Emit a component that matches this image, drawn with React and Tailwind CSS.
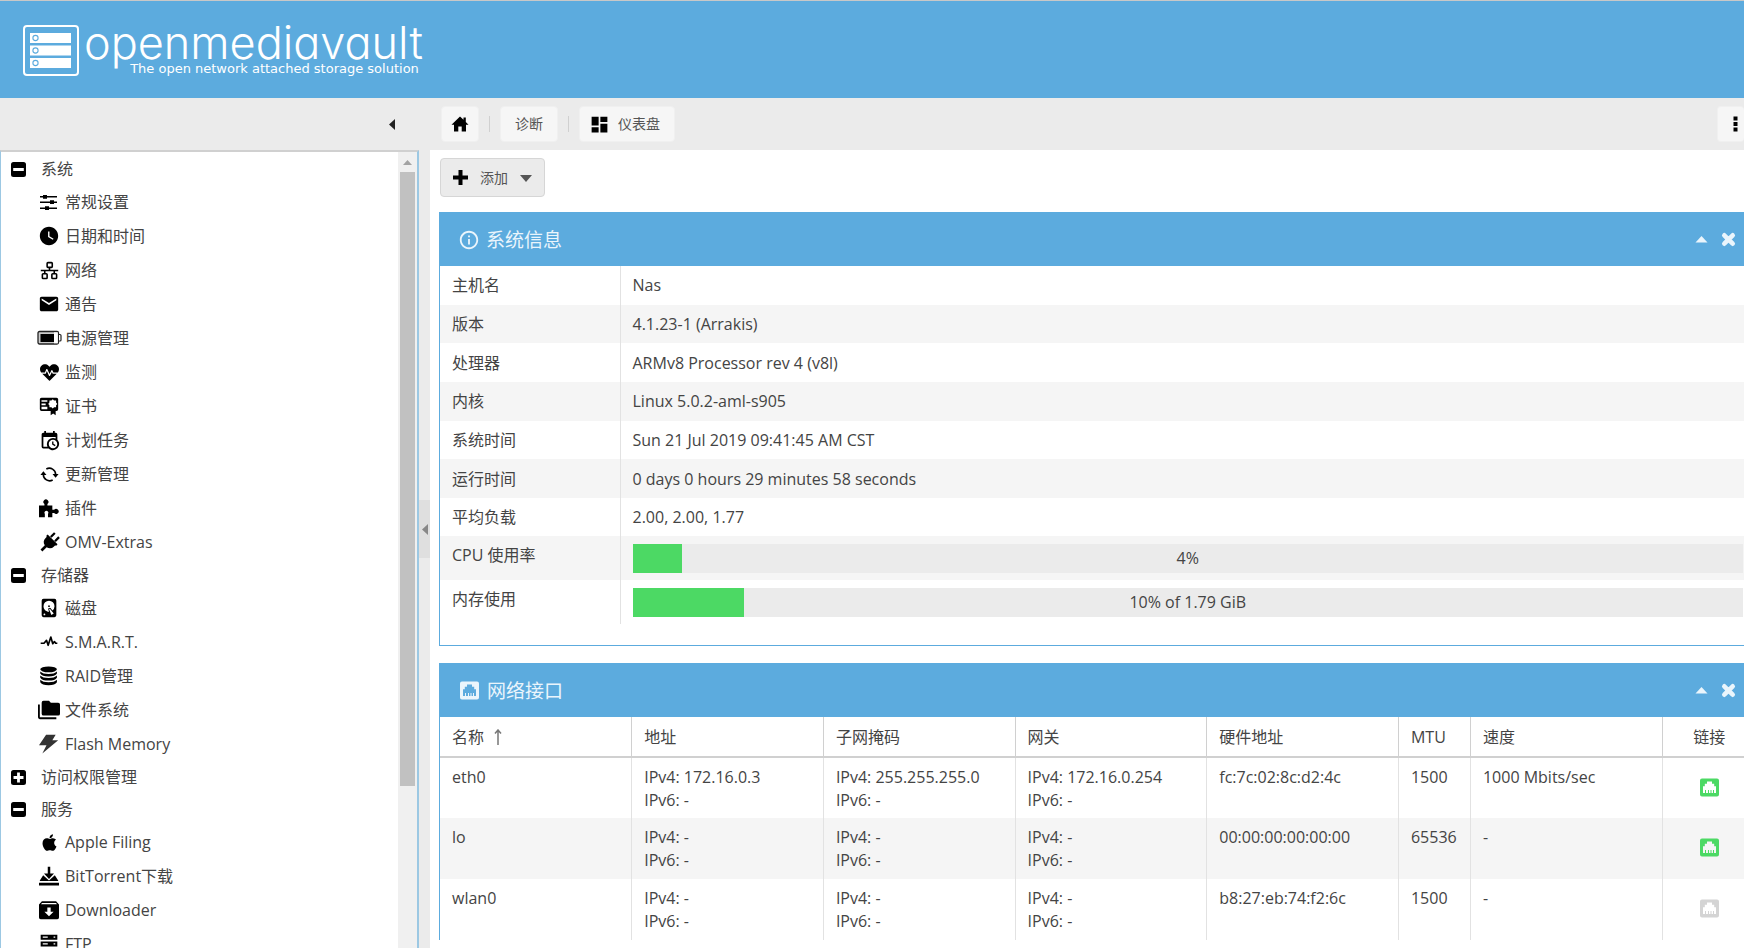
import { useState } from 'react'
import { FaApple, FaHeartbeat } from 'react-icons/fa'
import { MdDashboard, MdEmail, MdInfoOutline, MdWatchLater } from 'react-icons/md'

function Svg({ size = 20, box = 24, className = '', children }) {
    return (
        <svg width={size} height={size} viewBox={`0 0 ${box} ${box}`} fill="currentColor" aria-hidden="true" className={`shrink-0 ${className}`}>
            {children}
        </svg>
    )
}

const IconTune = () => (
    <Svg size={18} box={18}>
        <path d="M0 3h17v1.500H0zM0 8.500h17V10H0zM0 14.500h17V16H0zM3 2h4v3.800H3zM10 7.300h4V11h-4zM5 13.300h4V17H5z" />
    </Svg>
)

const IconNetwork = () => (
    <Svg size={19}>
        <g fill="none" stroke="currentColor" strokeWidth="2">
            <rect x="9" y="2" width="6.500" height="6" rx="1" />
            <rect x="3" y="16" width="6" height="6" rx="1" />
            <rect x="15" y="16" width="6" height="6" rx="1" />
            <path d="M12 8v4M1 12h22M6 12v4M18 12v4" />
        </g>
    </Svg>
)

const IconBattery = () => (
    <svg width="25" height="16" viewBox="0 0 25 16" aria-hidden="true" className="shrink-0">
        <rect x="1" y="1.500" width="20.500" height="12.500" rx="1.500" fill="#ccc" stroke="#222" strokeWidth="1.300" />
        <path d="M17 2.300h3.800v11H17z" fill="#fff" />
        <path d="M3.500 4H17v8H3.500z" fill="#000" />
        <path d="M22 4.500h1q1 0 1 1v4.500q0 1-1 1h-1" fill="#fff" stroke="#222" strokeWidth="1.200" />
    </svg>
)

const IconCertificate = () => (
    <Svg>
        <path fillRule="evenodd" d="M3 2h18a2 2 0 0 1 2 2v12a2 2 0 0 1-2 2h-1v5l-3-2-3 2v-5H3a2 2 0 0 1-2-2V4a2 2 0 0 1 2-2zm0 3v2h7V5zm0 4v2h5V9zm0 4v3h7v-3zM16.500 4l-1.600 1.500h-2.400v2.400L11 9.500l1.500 1.700v2.300h2.400l1.600 1.500 1.600-1.500h2.400v-2.300L22 9.500l-1.500-1.600V5.500h-2.400z" />
    </Svg>
)

const IconCalendarClock = () => (
    <Svg size={21}>
        <path d="M15 13h1.500v2.820l2.440 1.410-.75 1.300L15 16.690V13m4-5H5v11h4.670c-.43-.91-.67-1.930-.67-3a7 7 0 0 1 7-7c1.070 0 2.090.24 3 .67V8M5 21a2 2 0 0 1-2-2V5c0-1.110.89-2 2-2h1V1h2v2h8V1h2v2h1a2 2 0 0 1 2 2v6.100c1.240 1.260 2 2.990 2 4.900a7 7 0 0 1-7 7c-1.910 0-3.640-.76-4.900-2H5m11-9.850A4.850 4.850 0 0 0 11.150 16c0 2.680 2.170 4.850 4.850 4.850A4.850 4.850 0 0 0 20.850 16c0-2.680-2.170-4.850-4.850-4.850z" />
    </Svg>
)

const IconRefresh = () => (
    <Svg size={19}>
        <path d="M8 5A8 8 0 0 1 19.800 12M16 19A8 8 0 0 1 4.200 12" fill="none" stroke="currentColor" strokeWidth="2" />
        <path d="M15.800 11.500h7.700L19.700 16zM.5 12.500h7.700L4.300 8z" />
    </Svg>
)

const IconPuzzle = () => (
    <Svg>
        <path d="M0 9h6.500V7.200a3 3 0 1 1 3.600 0V9H16v5.200h2.200a3 3 0 1 1 0 3.800H16v5h-5.200v-4a2.300 2.300 0 1 0-3.800 0v4H0z" />
    </Svg>
)

const IconPlug = () => (
    <Svg size={21}>
        <g transform="rotate(45 12 12)">
            <path d="M7.300 0h2.600v6.500H7.300zM14.100 0h2.600v6.500h-2.600zM4 7h16v2.500h-1.200v2a6.800 6.800 0 0 1-5.300 6.600V25h-3v-6.900a6.800 6.800 0 0 1-5.300-6.600v-2H4z" />
        </g>
    </Svg>
)

const IconDisk = () => (
    <Svg size={22}>
        <path d="M6 2h12a2 2 0 0 1 2 2v16a2 2 0 0 1-2 2H6a2 2 0 0 1-2-2V4a2 2 0 0 1 2-2m6 2a6 6 0 0 0-6 6c0 3.310 2.690 6 6.100 6l-.88-2.230a1.010 1.010 0 0 1 .37-1.370l.86-.5a1.010 1.010 0 0 1 1.370.37l1.920 2.420A5.977 5.977 0 0 0 18 10a6 6 0 0 0-6-6m0 5a1 1 0 1 1 0 2 1 1 0 0 1 0-2m-5 9a1 1 0 1 0 0 2 1 1 0 0 0 0-2m5.090-4.730l2.490 6.310 2.590-1.500-4.220-5.310-.86.5z" />
    </Svg>
)

const IconPulse = () => (
    <Svg>
        <path d="M2 13.500h4l3-3.500 2 6 3.200-10 2.300 8 2-2.500 1.500 2h2" fill="none" stroke="currentColor" strokeWidth="2" strokeLinejoin="round" />
    </Svg>
)

const IconDatabase = () => (
    <Svg>
        <ellipse cx="11.500" cy="4" rx="10" ry="3.500" />
        <path d="M1.500 6.500q3 3 10 3t10-3V9q-2 3.500-10 3.500T1.500 9zM1.500 11.500q3 3 10 3t10-3V14q-2 3.500-10 3.500T1.500 14zM1.500 16.500q3 3 10 3t10-3v3q-2 3.500-10 3.500T1.500 19.500z" />
    </Svg>
)

const IconFolders = () => (
    <Svg size={22}>
        <path d="M22 4h-8l-2-2H6a2 2 0 0 0-2 2v12a2 2 0 0 0 2 2h16a2 2 0 0 0 2-2V6a2 2 0 0 0-2-2M2 6H0v14a2 2 0 0 0 2 2h18v-2H2V6z" />
    </Svg>
)

const IconFlash = () => (
    <Svg className="text-[#333]">
        <path d="M8.500 1H20l-4 6.500h7L4 23.500l5-10H0z" />
    </Svg>
)

const IconDownload = () => (
    <Svg>
        <path d="M10.500 1h3v8H18l-6 6.500L6 9h4.500zM5 11l7 6.500L19 11l4 6.500v.5H1v-.5zM0 20h24v3.500H0z" />
    </Svg>
)

const IconArchive = () => (
    <Svg>
        <path fillRule="evenodd" d="M3.500 1.500h17l3.500 4V21a2 2 0 0 1-2 2H2a2 2 0 0 1-2-2V5.500zM3.500 3.500l-1 1.500h19l-1-1.500zM10 9v5H6.500l5.500 5.500 5.500-5.500H14V9z" />
    </Svg>
)

const IconServer = () => (
    <Svg>
        <path fillRule="evenodd" d="M2 1h20v6H2zm2.500 2v1.500h6V3zm13 0v1.500h2V3zM2 9h20v6H2zm2.500 2v1.500h6V11zm13 0v1.500h2V11zM2 17h20v6H2zm2.500 2v1.500h6V19zm13 0v1.500h2V19z" />
    </Svg>
)

const IconEthernet = ({ className = '' }) => (
    <Svg size={19} box={19} className={className}>
        <path fillRule="evenodd" d="M2 .5h15a2 2 0 0 1 2 2v14a2 2 0 0 1-2 2H2a2 2 0 0 1-2-2v-14a2 2 0 0 1 2-2zM7 3.500v2.300H4.800v2.500H3V15h2v-3h1v3h2v-3h1v3h1.500v-3h1v3h1.500v-3h1v3h2V8.300h-1.800V5.800H12V3.500z" />
    </Svg>
)

const IconHome = () => (
    <Svg size={18} box={18}>
        <path d="M9 1.500l3.500 3.300V2.500h2.300v4.500L17.500 9.800H15V16.500h-4.300V11.500H7.300v5H3V9.800H.5z" />
    </Svg>
)

const IconCaretUp = () => (
    <Svg size={13} box={13}>
        <path d="M.5 9.500L6.500 3l6 6.500z" />
    </Svg>
)

const IconClose = () => (
    <Svg size={15} box={15}>
        <path d="M3.300 3.300l8.400 8.400M11.700 3.300l-8.400 8.400" stroke="currentColor" strokeWidth="4.600" strokeLinecap="round" />
    </Svg>
)

const IconFold = ({ open }) => (
    <Svg size={15} box={15}>
        <path fillRule="evenodd" d={open
            ? 'M2.500 0h10A2.500 2.500 0 0 1 15 2.500v10a2.500 2.500 0 0 1-2.500 2.500h-10A2.500 2.500 0 0 1 0 12.500v-10A2.500 2.500 0 0 1 2.500 0zM2.200 6v3h10.600V6z'
            : 'M2.500 0h10A2.500 2.500 0 0 1 15 2.500v10a2.500 2.500 0 0 1-2.500 2.500h-10A2.500 2.500 0 0 1 0 12.500v-10A2.500 2.500 0 0 1 2.500 0zM6.100 2.500v3.600H2.500v2.800h3.600v3.600h2.800V8.900h3.600V6.100H8.900V2.500z'} />
    </Svg>
)

const arbol = [
    {
        nombre: '系统', abierto: true, hijos: [
            ['常规设置', <IconTune />],
            ['日期和时间', <MdWatchLater size={22} />],
            ['网络', <IconNetwork />],
            ['通告', <MdEmail size={22} />],
            ['电源管理', <IconBattery />],
            ['监测', <FaHeartbeat size={19} />],
            ['证书', <IconCertificate />],
            ['计划任务', <IconCalendarClock />],
            ['更新管理', <IconRefresh />],
            ['插件', <IconPuzzle />],
            ['OMV-Extras', <IconPlug />],
        ],
    },
    {
        nombre: '存储器', abierto: true, hijos: [
            ['磁盘', <IconDisk />],
            ['S.M.A.R.T.', <IconPulse />],
            ['RAID管理', <IconDatabase />],
            ['文件系统', <IconFolders />],
            ['Flash Memory', <IconFlash />],
        ],
    },
    { nombre: '访问权限管理', abierto: false, hijos: [] },
    {
        nombre: '服务', abierto: true, hijos: [
            ['Apple Filing', <FaApple size={19} />],
            ['BitTorrent下载', <IconDownload />],
            ['Downloader', <IconArchive />],
            ['FTP', <IconServer />],
        ],
    },
]

const info = [
    ['主机名', 'Nas'],
    ['版本', '4.1.23-1 (Arrakis)'],
    ['处理器', 'ARMv8 Processor rev 4 (v8l)'],
    ['内核', 'Linux 5.0.2-aml-s905'],
    ['系统时间', 'Sun 21 Jul 2019 09:41:45 AM CST'],
    ['运行时间', '0 days 0 hours 29 minutes 58 seconds'],
    ['平均负载', '2.00, 2.00, 1.77'],
]

const barras = [
    ['CPU 使用率', '4%', 4.5],
    ['内存使用', '10% of 1.79 GiB', 10],
]

const interfaces = [
    { nombre: 'eth0', ip: '172.16.0.3', mascara: '255.255.255.0', puerta: '172.16.0.254', mac: 'fc:7c:02:8c:d2:4c', mtu: '1500', velocidad: '1000 Mbits/sec', enlace: true },
    { nombre: 'lo', ip: '-', mascara: '-', puerta: '-', mac: '00:00:00:00:00:00', mtu: '65536', velocidad: '-', enlace: true },
    { nombre: 'wlan0', ip: '-', mascara: '-', puerta: '-', mac: 'b8:27:eb:74:f2:6c', mtu: '1500', velocidad: '-', enlace: false },
]

function Logo() {
    return (
        <a href="#" aria-label="openmediavault" className="flex items-start gap-[5px] text-white">
            <svg width="56" height="51" viewBox="0 0 56 51" aria-hidden="true" className="mt-[24px] shrink-0">
                <rect x="1" y="1" width="54" height="49" rx="3" fill="none" stroke="#fff" strokeWidth="2" />
                <g fill="#fff">
                    <path d="M7 8h41v10H7zM7 20.500h41v10H7zM7 33h41v10H7z" />
                </g>
                <g fill="none" stroke="#5cabde" strokeWidth="1.100">
                    <circle cx="12.500" cy="13" r="2.600" />
                    <circle cx="12.500" cy="25.500" r="2.600" />
                    <circle cx="12.500" cy="38" r="2.600" />
                </g>
            </svg>
            <span className="flex flex-col items-end pt-[18px]">
                <span className="font-['Inter',sans-serif] text-[45px] leading-[48px] font-light [font-feature-settings:'cv11']">openmediavault</span>
                <span className="-mt-[6px] pr-1 font-['DejaVu_Sans',sans-serif] text-[13px] leading-4">The open network attached storage solution</span>
            </span>
        </a>
    )
}

function Arbol() {
    const [abiertos, setAbiertos] = useState(arbol.map((g) => g.abierto))

    return (
        <nav className="min-w-0 flex-1 overflow-hidden pt-px text-[#444]">
            {arbol.map((grupo, i) => (
                <div key={grupo.nombre}>
                    <button
                        onClick={() => setAbiertos(abiertos.map((a, j) => (j === i ? !a : a)))}
                        aria-expanded={abiertos[i]}
                        className="flex h-8 w-full items-center gap-[15px] pl-[10px]"
                    >
                        <span className="text-black"><IconFold open={abiertos[i]} /></span>
                        {grupo.nombre}
                    </button>
                    {abiertos[i] && grupo.hijos.map(([nombre, icono]) => (
                        <a key={nombre} href="#" className="flex h-[34px] items-center gap-[5px] pl-[37px] whitespace-nowrap">
                            <span className="flex w-[22px] shrink-0 justify-center text-black">{icono}</span>
                            {nombre}
                        </a>
                    ))}
                </div>
            ))}
        </nav>
    )
}

function Panel({ titulo, icono, className = '', children }) {
    return (
        <section className={`border border-r-0 border-[#5cabde] bg-white ${className}`}>
            <header className="flex h-[53px] items-center gap-2 bg-[#5cabde] pr-2 pl-5 text-[#eaf5fc]">
                {icono}
                <h2 className="flex-1 text-[19px] leading-6">{titulo}</h2>
                <button aria-label="折叠"><IconCaretUp /></button>
                <button aria-label="关闭" className="ml-[5px]"><IconClose /></button>
            </header>
            {children}
        </section>
    )
}

function InfoSistema() {
    return (
        <Panel titulo="系统信息" icono={<MdInfoOutline size={22} className="-mx-[2px]" />} className="pb-[21px]">
            <table className="h-[358px] w-full table-fixed border-collapse">
                <colgroup>
                    <col className="w-[180px]" />
                    <col />
                </colgroup>
                <tbody>
                    {info.map(([campo, valor]) => (
                        <tr key={campo} className="h-[38px] even:bg-[#f5f5f5]">
                            <th scope="row" className="border-r border-[#e2e2e2] px-3 text-left font-normal">{campo}</th>
                            <td className="px-3">{valor}</td>
                        </tr>
                    ))}
                    {barras.map(([campo, texto, valor]) => (
                        <tr key={campo} className="h-[43px] even:bg-[#f5f5f5]">
                            <th scope="row" className="border-r border-[#e2e2e2] px-3 pt-2 text-left align-top font-normal">{campo}</th>
                            <td className="pr-px pl-3">
                                <div role="progressbar" aria-label={campo} aria-valuenow={valor} className="grid h-[29px] items-center bg-[#ebebeb] text-center">
                                    <div className="col-start-1 row-start-1 h-full bg-[#4cd964]" style={{ width: `${valor}%` }} />
                                    <span className="col-start-1 row-start-1">{texto}</span>
                                </div>
                            </td>
                        </tr>
                    ))}
                </tbody>
            </table>
        </Panel>
    )
}

function Ips({ ip }) {
    return (
        <td className="border-r border-[#e2e2e2] px-3 pt-2">
            IPv4: {ip}
            <br />
            IPv6: -
        </td>
    )
}

function InterfacesRed() {
    const celda = 'border-r border-[#e2e2e2] px-3 pt-2'
    const cabecera = 'border-r border-[#d0d0d0] px-3 text-left font-normal'

    return (
        <Panel titulo="网络接口" icono={<IconEthernet />} className="border-b-0">
            <table className="w-full table-fixed border-collapse">
                <colgroup>
                    <col className="w-[14.7%]" />
                    <col className="w-[14.7%]" />
                    <col className="w-[14.7%]" />
                    <col className="w-[14.7%]" />
                    <col className="w-[14.7%]" />
                    <col className="w-[72px]" />
                    <col className="w-[14.7%]" />
                    <col />
                </colgroup>
                <thead>
                    <tr className="h-10 border-b-2 border-[#d0d0d0]">
                        <th className={cabecera}>
                            <span className="flex items-center gap-[10px]">
                                名称
                                <svg width="8" height="16" viewBox="0 0 8 16" fill="none" stroke="#777" strokeWidth="1.500" aria-hidden="true">
                                    <path d="M4 16V1M1 4.500L4 1l3 3.500" />
                                </svg>
                            </span>
                        </th>
                        <th className={cabecera}>地址</th>
                        <th className={cabecera}>子网掩码</th>
                        <th className={cabecera}>网关</th>
                        <th className={cabecera}>硬件地址</th>
                        <th className={cabecera}>MTU</th>
                        <th className={cabecera}>速度</th>
                        <th className="pl-3 font-normal">链接</th>
                    </tr>
                </thead>
                <tbody>
                    {interfaces.map((red) => (
                        <tr key={red.nombre} className="h-[61px] align-top leading-[23px] even:bg-[#f5f5f5]">
                            <td className={celda}>{red.nombre}</td>
                            <Ips ip={red.ip} />
                            <Ips ip={red.mascara} />
                            <Ips ip={red.puerta} />
                            <td className={celda}>{red.mac}</td>
                            <td className={celda}>{red.mtu}</td>
                            <td className={celda}>{red.velocidad}</td>
                            <td className="pt-5 pl-3">
                                <IconEthernet className={`mx-auto ${red.enlace ? 'text-[#4cd964]' : 'text-[#d4d4d4]'}`} />
                            </td>
                        </tr>
                    ))}
                </tbody>
            </table>
        </Panel>
    )
}

function Separador() {
    return <span className="mx-[10px] h-4 w-px bg-[#d0d0d0]" />
}

function App() {
    const miga = 'flex h-9 items-center rounded-sm border border-[#f0f0f0] bg-[#f6f6f6] text-[14px]'

    return (
        <div className="flex h-screen flex-col overflow-hidden bg-white font-['Open_Sans','Noto_Sans_CJK_SC',sans-serif] text-[16px] leading-[22px] text-[#444]">
            <header className="h-[98px] shrink-0 border-t border-[#c8c8c8] bg-[#5cabde] pl-[23px]">
                <Logo />
            </header>
            <div className="flex min-h-0 flex-1">
                <aside className="flex w-[419px] shrink-0 flex-col">
                    <div className="flex h-[52px] shrink-0 items-center justify-end bg-[#ebebeb] pr-6">
                        <button aria-label="收起菜单">
                            <svg width="6" height="11" viewBox="0 0 6 11" fill="#222" aria-hidden="true"><path d="M6 0v11L0 5.500z" /></svg>
                        </button>
                    </div>
                    <div className="flex min-h-0 flex-1 border-t-2 border-r-2 border-l border-[#9cc8e3] border-t-[#d0d0d0]">
                        <Arbol />
                        <div className="flex w-[19px] shrink-0 flex-col items-center bg-[#f0f0f0]">
                            <svg width="9" height="20" viewBox="0 0 9 20" fill="#a3a3a3" aria-hidden="true"><path d="M0 13l4.500-5L9 13z" /></svg>
                            <div className="h-[614px] w-[15px] bg-[#c1c1c1]" />
                        </div>
                    </div>
                </aside>
                <div className="flex w-[11px] shrink-0 items-center bg-[#ebebeb] pt-3">
                    <button aria-label="收起侧栏" className="flex h-[58px] w-full items-center justify-center bg-[#dfdfdf]">
                        <svg width="6" height="11" viewBox="0 0 6 11" fill="#888" aria-hidden="true"><path d="M6 0v11L0 5.500z" /></svg>
                    </button>
                </div>
                <main className="flex min-w-0 flex-1 flex-col">
                    <div className="flex h-[52px] shrink-0 items-center bg-[#ebebeb] pl-[11px]">
                        <button aria-label="主页" className={`${miga} px-[9px]`}><span className="text-black"><IconHome /></span></button>
                        <Separador />
                        <button className={`${miga} px-[14px] text-[#555]`}>诊断</button>
                        <Separador />
                        <button className={`${miga} gap-2 px-[9px] pr-[14px] text-[#555]`}>
                            <MdDashboard size={21} className="text-black" />
                            仪表盘
                        </button>
                        <button aria-label="更多" className={`${miga} ml-auto border-r-0 pr-[6px] pl-[15px]`}>
                            <svg width="5" height="16" viewBox="0 0 5 16" aria-hidden="true"><path d="M.5.500h4v4h-4zM.5 6h4v4h-4zM.5 11.500h4v4h-4z" fill="#000" /></svg>
                        </button>
                    </div>
                    <div className="flex min-h-0 flex-1 flex-col overflow-hidden pt-2 pl-[9px]">
                        <button className="ml-px flex h-[39px] shrink-0 items-center gap-3 self-start rounded-sm border border-[#d6d6d6] bg-[#ebebeb] px-3 text-[14px] text-[#555]">
                            <Svg size={15} box={15} className="text-black"><path d="M5.500 0h4v5.500H15v4H9.500V15h-4V9.500H0v-4h5.500z" /></Svg>
                            添加
                            <svg width="12" height="9" viewBox="0 0 12 9" fill="#555" aria-hidden="true"><path d="M0 2h12L6 9z" /></svg>
                        </button>
                        <div className="mt-[15px] flex flex-col gap-[17px]">
                            <InfoSistema />
                            <InterfacesRed />
                        </div>
                    </div>
                </main>
            </div>
        </div>
    )
}

export default App
